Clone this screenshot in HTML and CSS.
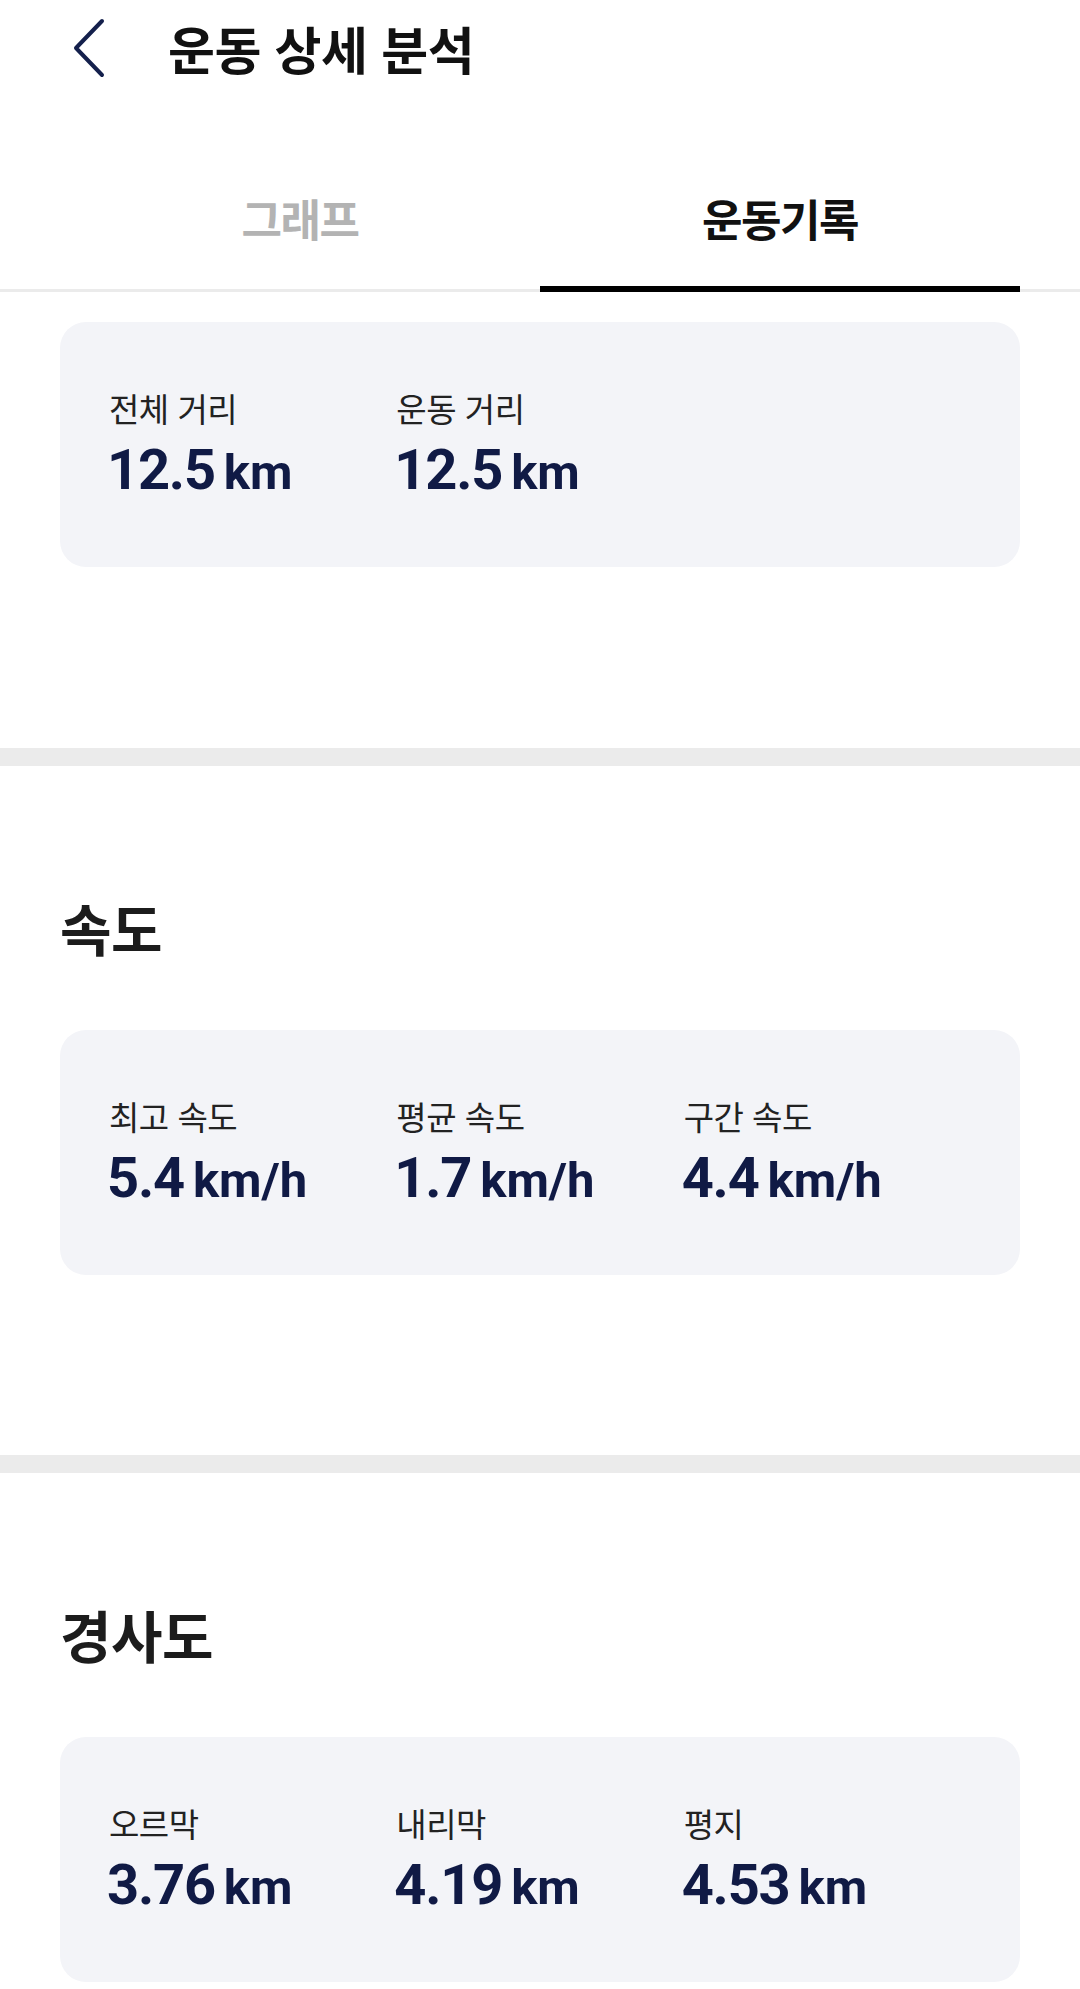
FILE: index.html
```html
<!DOCTYPE html>
<html lang="ko">
<head>
<meta charset="utf-8">
<title>운동 상세 분석</title>
<link rel="stylesheet" href="styles.css">
</head>
<body>
<header class="header">
  <svg class="back" width="34" height="60" viewBox="0 0 34 60" aria-hidden="true">
    <path d="M30 3 L4 30 L30 57" fill="none" stroke="#14204c" stroke-width="4" stroke-linecap="round" stroke-linejoin="round"/>
  </svg>
  <h1 class="title">운동 상세 분석</h1>
</header>
<nav class="tabs">
  <div class="tab">그래프</div>
  <div class="tab active">운동기록</div>
</nav>

<section class="section first">
  <div class="card">
    <div class="stat"><div class="label">전체 거리</div><div class="value">12.5<span class="unit">km</span></div></div>
    <div class="stat"><div class="label">운동 거리</div><div class="value">12.5<span class="unit">km</span></div></div>
  </div>
</section>
<div class="divider"></div>
<section class="section">
  <h2 class="heading">속도</h2>
  <div class="card">
    <div class="stat"><div class="label">최고 속도</div><div class="value">5.4<span class="unit">km/h</span></div></div>
    <div class="stat"><div class="label">평균 속도</div><div class="value">1.7<span class="unit">km/h</span></div></div>
    <div class="stat"><div class="label">구간 속도</div><div class="value">4.4<span class="unit">km/h</span></div></div>
  </div>
</section>
<div class="divider"></div>
<section class="section last">
  <h2 class="heading">경사도</h2>
  <div class="card">
    <div class="stat"><div class="label">오르막</div><div class="value">3.76<span class="unit">km</span></div></div>
    <div class="stat"><div class="label">내리막</div><div class="value">4.19<span class="unit">km</span></div></div>
    <div class="stat"><div class="label">평지</div><div class="value">4.53<span class="unit">km</span></div></div>
  </div>
</section>
</body>
</html>
```
FILE: styles.css
```css
* { box-sizing: border-box; }
html, body { margin: 0; padding: 0; background: #fff; }
body {
  width: 1080px;
  font-family: "Noto Sans CJK KR", "Noto Sans", sans-serif;
  color: #111;
}
.header {
  display: flex;
  align-items: center;
  height: 96px;
  padding-left: 72px;
}
.back { display: block; flex: none; }
.title {
  margin: 0 0 0 62px;
  font-size: 51px;
  font-weight: 700;
  letter-spacing: -0.5px;
  line-height: 60px;
  color: #111;
}
.tabs {
  display: flex;
  padding: 0 60px;
  border-bottom: 3px solid #ebebeb;
}
.tab {
  flex: 1;
  height: 193px;
  padding-top: 92px;
  text-align: center;
  font-size: 44px;
  font-weight: 700;
  letter-spacing: -1.5px;
  line-height: 60px;
  color: #b3b3b3;
}
.tab.active {
  color: #111;
  border-bottom: 6px solid #000;
  margin-bottom: -3px;
  height: 196px;
}
.section { padding: 0 60px 180px; }
.section.first { padding-top: 30px; padding-bottom: 181px; }
.section.last { padding-bottom: 5px; }
.heading {
  margin: 0;
  padding-top: 126px;
  height: 264px;
  font-size: 56px;
  font-weight: 700;
  letter-spacing: -0.5px;
  line-height: 70px;
  color: #1c1c1c;
}
.card {
  display: grid;
  grid-template-columns: repeat(3, 1fr);
  align-items: center;
  height: 245px;
  padding: 0 49px;
  background: #f3f4f8;
  border-radius: 26px;
}
.label {
  font-size: 33px;
  letter-spacing: -0.5px;
  line-height: 40px;
  color: #222;
}
.value {
  margin-top: 14px;
  margin-left: -2px;
  font-family: Roboto, "Liberation Sans", sans-serif;
  font-size: 56px;
  font-weight: 700;
  letter-spacing: -1.2px;
  line-height: 56px;
  color: #101a45;
}
.unit {
  margin-left: 9px;
  font-size: 49px;
  letter-spacing: 0;
}
.divider { height: 18px; background: #ebebeb; }
```
